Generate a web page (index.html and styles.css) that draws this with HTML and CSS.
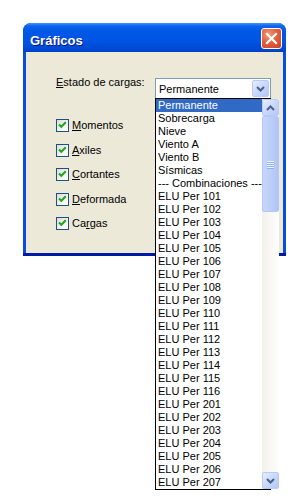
FILE: index.html
```html
<!DOCTYPE html>
<html>
<head>
<meta charset="utf-8">
<link rel="stylesheet" href="styles.css">
</head>
<body>
<div class="window">
  <div class="titlebar">
    <span class="title">Gráficos</span>
    <span class="close">
      <svg width="21" height="21" viewBox="0 0 21 21"><path d="M6 6 L15 15 M15 6 L6 15" stroke="#fff" stroke-width="2.2" stroke-linecap="square"/></svg>
    </span>
  </div>
  <div class="client">
    <div class="combo-row">
      <span class="label"><u>E</u>stado de cargas:</span>
      <div class="combo">
        <span class="combo-text">Permanente</span>
        <span class="sb-btn combo-btn">
          <svg width="9" height="6" viewBox="0 0 9 6"><path d="M1 1 L4.5 4.5 L8 1" fill="none" stroke="#4D6185" stroke-width="2"/></svg>
        </span>
        <div class="dropdown">
          <ul class="items">
            <li class="sel">Permanente</li>
            <li>Sobrecarga</li>
            <li>Nieve</li>
            <li>Viento A</li>
            <li>Viento B</li>
            <li>Sísmicas</li>
            <li>--- Combinaciones ---</li>
            <li>ELU Per 101</li>
            <li>ELU Per 102</li>
            <li>ELU Per 103</li>
            <li>ELU Per 104</li>
            <li>ELU Per 105</li>
            <li>ELU Per 106</li>
            <li>ELU Per 107</li>
            <li>ELU Per 108</li>
            <li>ELU Per 109</li>
            <li>ELU Per 110</li>
            <li>ELU Per 111</li>
            <li>ELU Per 112</li>
            <li>ELU Per 113</li>
            <li>ELU Per 114</li>
            <li>ELU Per 115</li>
            <li>ELU Per 116</li>
            <li>ELU Per 201</li>
            <li>ELU Per 202</li>
            <li>ELU Per 203</li>
            <li>ELU Per 204</li>
            <li>ELU Per 205</li>
            <li>ELU Per 206</li>
            <li>ELU Per 207</li>
          </ul>
          <div class="scrollbar">
            <span class="sb-btn">
              <svg width="9" height="6" viewBox="0 0 9 6"><path d="M1 5 L4.5 1.5 L8 5" fill="none" stroke="#4D6185" stroke-width="2"/></svg>
            </span>
            <div class="track">
              <div class="thumb">
                <span class="grip"></span><span class="grip"></span><span class="grip"></span><span class="grip"></span>
              </div>
            </div>
            <span class="sb-btn">
              <svg width="9" height="6" viewBox="0 0 9 6"><path d="M1 1 L4.5 4.5 L8 1" fill="none" stroke="#4D6185" stroke-width="2"/></svg>
            </span>
          </div>
        </div>
      </div>
    </div>
    <div class="checks">
      <div class="check"><span class="box"><svg width="11" height="11" viewBox="0 0 11 11"><path d="M2 4.5 L4.3 6.8 L8.8 2.3" fill="none" stroke="#21A121" stroke-width="2"/></svg></span><span><u>M</u>omentos</span></div>
      <div class="check"><span class="box"><svg width="11" height="11" viewBox="0 0 11 11"><path d="M2 4.5 L4.3 6.8 L8.8 2.3" fill="none" stroke="#21A121" stroke-width="2"/></svg></span><span><u>A</u>xiles</span></div>
      <div class="check"><span class="box"><svg width="11" height="11" viewBox="0 0 11 11"><path d="M2 4.5 L4.3 6.8 L8.8 2.3" fill="none" stroke="#21A121" stroke-width="2"/></svg></span><span><u>C</u>ortantes</span></div>
      <div class="check"><span class="box"><svg width="11" height="11" viewBox="0 0 11 11"><path d="M2 4.5 L4.3 6.8 L8.8 2.3" fill="none" stroke="#21A121" stroke-width="2"/></svg></span><span><u>D</u>eformada</span></div>
      <div class="check"><span class="box"><svg width="11" height="11" viewBox="0 0 11 11"><path d="M2 4.5 L4.3 6.8 L8.8 2.3" fill="none" stroke="#21A121" stroke-width="2"/></svg></span><span>Ca<u>r</u>gas</span></div>
    </div>
  </div>
</div>
</body>
</html>
```

FILE: styles.css
```css
* { box-sizing: border-box; }
html, body { margin: 0; padding: 0; background: #fff; }
body {
  min-height: 504px;
  font-family: "Liberation Sans", Arial, sans-serif;
  font-size: 11px;
  line-height: 13px;
  color: #000;
  padding-top: 23px;
}
.window {
  margin: 0 0 0 23px;
  width: 263px;
  height: 233px;
  border-radius: 8px 8px 0 0;
  background: #0A4CDE;
  display: flex;
  flex-direction: column;
  padding: 0 3px 3px 3px;
  box-shadow: inset 0 -3px 0 #0019A8;
}
.titlebar {
  height: 29px;
  margin: 0 -3px;
  padding: 0 4px 0 7px;
  border-radius: 8px 8px 0 0;
  background: linear-gradient(to bottom, #3E94FF 0px, #0F64EE 3px, #0058E6 8px, #0054E3 18px, #0049D2 26px, #0040C0 29px);
  display: flex;
  align-items: flex-start;
  justify-content: space-between;
}
.title {
  color: #fff;
  font-weight: bold;
  font-size: 13px;
  line-height: 15px;
  padding-top: 10px;
  text-shadow: 1px 1px 0 #0A1883;
}
.close {
  margin-top: 5px;
  width: 21px;
  height: 21px;
  border: 1px solid #fff;
  border-radius: 3px;
  background: radial-gradient(circle at 35% 30%, #F19B7E 0%, #E2613C 45%, #C9421F 100%);
  display: flex;
}
.close svg { margin: -1px; }
.client {
  flex: 1;
  background: #ECE9D8;
  padding: 24px 0 0 30px;
}
.combo-row {
  display: flex;
  align-items: flex-start;
}
.label {
  width: 99px;
}
u { text-decoration: underline; text-underline-offset: 1px; }
.combo {
  position: relative;
  margin-top: 2px;
  width: 116px;
  height: 21px;
  border: 1px solid #7F9DB9;
  background: #fff;
  display: flex;
  align-items: center;
  justify-content: space-between;
  padding: 1px 1px 1px 3px;
}
.combo-text { padding-top: 1px; }
.sb-btn {
  width: 17px;
  height: 17px;
  flex: none;
  border: 1px solid #B9CBF5;
  border-radius: 2px;
  background: linear-gradient(135deg, #E6EEFD 0%, #C9D8FC 50%, #B4C8F6 100%);
  display: flex;
  align-items: center;
  justify-content: center;
}
.dropdown {
  position: absolute;
  top: 19px;
  left: -1px;
  width: 116px;
  height: 392px;
  border: 1px solid #000;
  background: #fff;
  display: flex;
  z-index: 5;
}
.items {
  list-style: none;
  margin: 0;
  padding: 0;
  flex: 1;
}
.items li {
  height: 13px;
  line-height: 13px;
  padding-left: 2px;
  white-space: nowrap;
  overflow: hidden;
}
.items li.sel {
  background: #316AC5;
  color: #fff;
}
.scrollbar {
  width: 17px;
  display: flex;
  flex-direction: column;
  background: linear-gradient(to right, #F3F1EC, #FEFEFB);
}
.track {
  flex: 1;
}
.thumb {
  height: 96px;
  border: 1px solid #B5C8F5;
  border-radius: 2px;
  background: linear-gradient(to right, #C8D6FB, #BACCF8 60%, #B0C4F5);
  display: flex;
  flex-direction: column;
  align-items: center;
  justify-content: center;
  gap: 1px;
}
.grip {
  width: 7px;
  height: 1px;
  background: #EEF4FE;
  box-shadow: 0 1px 0 #8CB0F8;
}
.checks {
  display: flex;
  flex-direction: column;
  margin-top: 20px;
}
.check {
  height: 24.5px;
  display: flex;
  align-items: flex-start;
  gap: 3px;
}
.box {
  width: 13px;
  height: 13px;
  border: 1px solid #1C5180;
  background: linear-gradient(135deg, #DCDCD7 0%, #F4F4F0 60%, #FFFFFF 100%);
  display: flex;
}
```
